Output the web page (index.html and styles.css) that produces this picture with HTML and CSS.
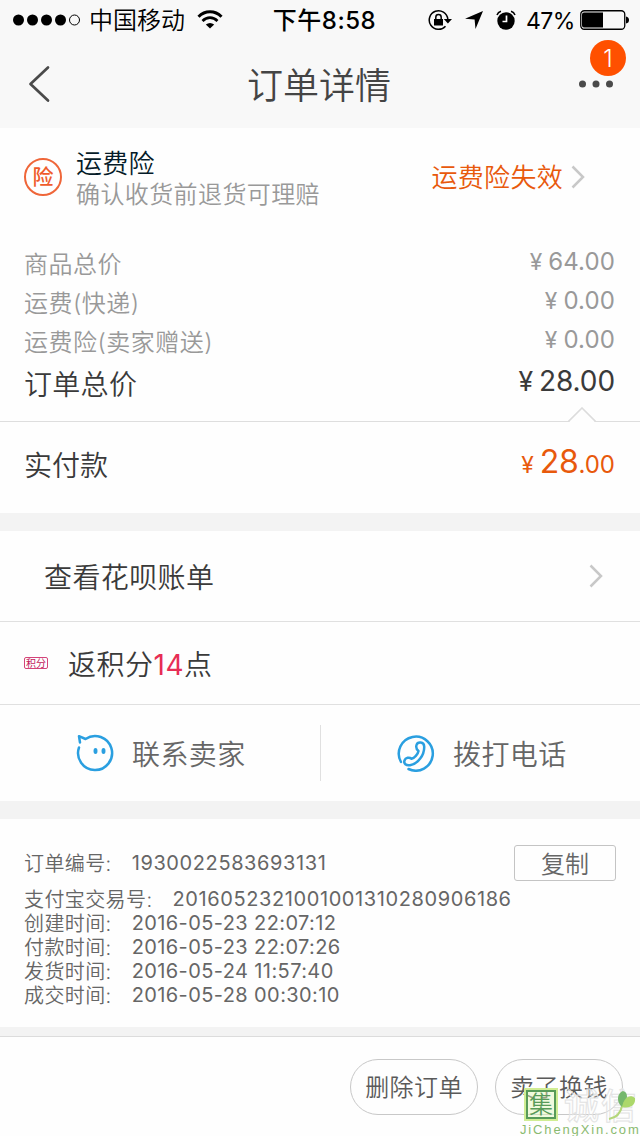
FILE: index.html
```html
<!DOCTYPE html>
<html lang="zh-CN">
<head>
<meta charset="utf-8">
<title>订单详情</title>
<link rel="stylesheet" href="styles.css">
</head>
<body>
<div class="screen">
  <header class="top">
    <div class="status">
      <div class="status-left">
        <svg class="signal" width="68" height="12" viewBox="0 0 68 12"><circle cx="5.5" cy="6" r="5.5"/><circle cx="19.5" cy="6" r="5.5"/><circle cx="33.5" cy="6" r="5.5"/><circle cx="47.5" cy="6" r="5.5"/><circle cx="61.5" cy="6" r="5" fill="none" stroke="#000" stroke-width="1"/></svg>
        <span class="carrier">中国移动</span>
        <svg class="wifi" width="26" height="20" viewBox="0 0 26 20" fill="none" stroke="#000"><path d="M1.5 6.8C8 .2 18 .2 24.500 6.800" stroke-width="3"/><path d="M5.500 11C10 6.600 16 6.600 20.500 11" stroke-width="2.700"/><path d="M13 18.500 8.800 14.600Q13 11.200 17.200 14.600Z" fill="#000" stroke="none"/></svg>
      </div>
      <div class="clock">下午8:58</div>
      <div class="status-right">
        <svg width="24" height="22" viewBox="0 0 24 22" fill="none" stroke="#000" stroke-width="1.500"><path d="M17.500 17.200A9.300 9.300 0 1 1 19.800 10"/><path d="M15.800 10H24l-4.100 4.600Z" fill="#000" stroke="none"/><path d="M6 10h9v6.500H6Z" fill="#000" stroke="none"/><path d="M7.800 10V8.200a2.700 2.700 0 0 1 5.400 0V10"/></svg>
        <svg class="arrow" width="18" height="18" viewBox="0 0 18 18"><path d="M18 0 10.500 18 9.600 8.500 0 7.700Z"/></svg>
        <svg class="alarm" width="20" height="20" viewBox="0 0 20 20"><circle cx="10" cy="11" r="8.700"/><path d="M1 5A6 6 0 0 1 5 1.200M15 1.200A6 6 0 0 1 19 5" fill="none" stroke="#000" stroke-width="1.500"/><path d="M10.500 5.500v6H6.500" fill="none" stroke="#fff" stroke-width="1.700"/></svg>
        <span class="percent">47%</span>
        <svg width="49" height="20" viewBox="0 0 49 20"><rect x=".75" y=".75" width="44" height="18.500" rx="3.500" fill="none" stroke="#000" stroke-width="1.300"/><path d="M4 2.500h19v15H4a2 2 0 0 1-2-2v-11a2 2 0 0 1 2-2Z"/><path d="M46 6.500q3 .5 3 3.500t-3 3.500Z"/></svg>
      </div>
    </div>
    <div class="nav">
      <svg class="back" width="22" height="38" viewBox="0 0 22 38" fill="none" stroke="#4a4a4a" stroke-width="2.700" stroke-linecap="round" stroke-linejoin="round"><path d="M20 2.500 2.500 19 20 35.500"/></svg>
      <h1>订单详情</h1>
      <div class="more">
        <svg width="34" height="8" viewBox="0 0 34 8" fill="#4a4a4a"><circle cx="3.500" cy="4" r="3.500"/><circle cx="17" cy="4" r="3.500"/><circle cx="30.500" cy="4" r="3.500"/></svg>
        <span class="badge">1</span>
      </div>
    </div>
  </header>

  <section class="insurance">
    <div class="seal">险</div>
    <div class="insurance-text">
      <div class="insurance-name">运费险</div>
      <div class="insurance-note">确认收货前退货可理赔</div>
    </div>
    <div class="insurance-state">运费险失效</div>
    <svg width="14" height="24" viewBox="0 0 14 24" fill="none" stroke="#c8c8c8" stroke-width="2.500"><path d="m1.500 1.500 10.500 10.500-10.500 10.500"/></svg>
  </section>

  <section class="prices">
    <div class="price"><span class="label">商品总价</span><span class="sum"><i class="yen">¥</i>64.00</span></div>
    <div class="price"><span class="label">运费(快递)</span><span class="sum"><i class="yen">¥</i>0.00</span></div>
    <div class="price"><span class="label">运费险(卖家赠送)</span><span class="sum"><i class="yen">¥</i>0.00</span></div>
    <div class="price total"><span class="label">订单总价</span><span class="sum"><i class="yen">¥</i>28.00</span></div>
  </section>

  <section class="paid">
    <svg class="notch" width="28" height="16" viewBox="0 0 28 16"><path d="M1 15 14 1.500 27 15v1H1Z" fill="#fefefe"/><path d="M.5 14.500 14 1 27.500 14.500" fill="none" stroke="#dcdcdc" stroke-width="1.600"/></svg>
    <span class="label">实付款</span>
    <span class="paid-sum"><i class="yen">¥</i><b>28</b>.00</span>
  </section>

  <section class="bill">
    <span>查看花呗账单</span>
    <svg width="14" height="24" viewBox="0 0 14 24" fill="none" stroke="#c8c8c8" stroke-width="2.500"><path d="m1.500 1.500 10.500 10.500-10.500 10.500"/></svg>
  </section>

  <section class="points">
    <span class="points-tag">积分</span>
    <span>返积分<em>14</em>点</span>
  </section>

  <section class="contact">
    <div class="contact-item">
      <svg width="38" height="38" viewBox="0 0 38 38" fill="none" stroke="#2a9fe0" stroke-width="2.500" stroke-linecap="round" stroke-linejoin="round"><path d="M4 8.500 3 2.200 9.500 5A17 17 0 1 1 3 13.500"/><g fill="#2a9fe0" stroke="none"><ellipse cx="19.500" cy="17" rx="2" ry="3"/><ellipse cx="27.500" cy="17" rx="2" ry="3"/></g></svg>
      <span>联系卖家</span>
    </div>
    <div class="contact-item">
      <svg width="38" height="38" viewBox="0 0 38 38" fill="none" stroke="#2a9fe0" stroke-width="2.500" stroke-linecap="round" stroke-linejoin="round"><path d="M4 28A17 17 0 1 1 11.500 35"/><path d="M19.500 11C20.500 7.500 27 7.500 27.200 12.500 27.500 21 21 30 13 31.200 9 31.800 6.500 29.500 7.500 26.500 8.500 23.500 12.500 23 14.500 24.800 17.500 24 20.800 20.500 21.500 17 19.500 15.500 18.800 13.500 19.500 11Z"/></svg>
      <span>拨打电话</span>
    </div>
  </section>

  <section class="order">
    <div class="line first"><span class="key">订单编号:</span><span class="num">1930022583693131</span><button class="copy">复制</button></div>
    <div class="line"><span class="key">支付宝交易号:</span><span class="num">2016052321001001310280906186</span></div>
    <div class="line"><span class="key">创建时间:</span><span class="date">2016-05-23 22:07:12</span></div>
    <div class="line"><span class="key">付款时间:</span><span class="date">2016-05-23 22:07:26</span></div>
    <div class="line"><span class="key">发货时间:</span><span class="date">2016-05-24 11:57:40</span></div>
    <div class="line"><span class="key">成交时间:</span><span class="date">2016-05-28 00:30:10</span></div>
  </section>

  <footer class="actions">
    <button class="pill">删除订单</button>
    <button class="pill">卖了换钱</button>
    <div class="watermark">
      <div class="mark-row"><span class="mark-box">集</span><span class="mark-outline">诚信</span></div>
      <svg class="leaf" width="28" height="32" viewBox="0 0 28 32"><path d="M1 29Q12 27 14 16" fill="none" stroke="#b4d77b" stroke-width="2"/><path d="M14 17C8 12 9 3 15 1c5 1 6 8-1 16Z" fill="#75b76c"/><path d="M14 17C16 7 22 4 27 8c1 7-5 11-13 9Z" fill="#acd86b"/></svg>
      <div class="mark-url">JiChengXin.com</div>
    </div>
  </footer>
</div>
</body>
</html>
```

FILE: styles.css
```css
* { box-sizing: border-box; }
body {
  margin: 0;
  background: #fefefe;
  font-family: Inter, "Noto Sans CJK SC", sans-serif;
  font-weight: 350;
  color: #3a3a3a;
}
svg { display: block; flex: none; }
i, em { font-style: normal; }
button { font: inherit; color: inherit; padding: 0; background: transparent; }
.screen {
  display: flex;
  flex-direction: column;
  width: 640px;
  height: 1136px;
  overflow: hidden;
}
.screen > * { flex: none; white-space: nowrap; }

.top { height: 128px; background: #f8f8f8; }
.status {
  display: grid;
  grid-template-columns: 260px 129px 251px;
  align-items: center;
  height: 40px;
  color: #000;
  font-size: 24px;
  line-height: 40px;
}
.status-left { display: flex; align-items: center; padding-left: 13px; }
.carrier { margin-left: 8px; padding-top: 2px; line-height: 38px; }
.wifi { margin-left: 12px; }
.clock { padding-top: 2px; line-height: 38px; text-align: center; font-weight: 500; letter-spacing: .5px; }
.status-right { display: flex; align-items: center; padding-left: 39px; }
.arrow { margin-left: 13px; }
.alarm { margin-left: 13px; }
.percent { width: 48px; margin: 2px 6px 0 10px; font-size: 23px; font-weight: 400; line-height: 38px; letter-spacing: -.5px; }

.nav {
  display: grid;
  grid-template-columns: 119px 1fr 121px;
  align-items: center;
  height: 88px;
}
.back { margin-left: 28px; }
.nav h1 { margin: 0; padding-top: 4px; font-size: 36px; font-weight: 350; line-height: 52px; text-align: center; color: #444; }
.more { position: relative; justify-self: end; margin-right: 27px; }
.badge {
  position: absolute;
  left: 11px;
  top: -40px;
  width: 36px;
  height: 36px;
  border-radius: 50%;
  background: #ff5000;
  color: #fff;
  font-size: 24px;
  line-height: 38px;
  text-align: center;
}

.insurance {
  display: flex;
  align-items: center;
  height: 100px;
  padding: 0 55px 2px 24px;
}
.seal {
  width: 38px;
  height: 38px;
  border: 2px solid #ef6639;
  border-radius: 50%;
  color: #ef5b2b;
  font-size: 21px;
  font-weight: 500;
  line-height: 34px;
  text-align: center;
}
.insurance-text { flex: 1; margin-left: 14px; padding-top: 4px; }
.insurance-name { font-size: 26px; line-height: 32px; letter-spacing: .2px; color: #051b28; }
.insurance-note { font-size: 24px; line-height: 30px; letter-spacing: .4px; color: #999; }
.insurance-state { margin-right: 8px; font-size: 26px; line-height: 36px; margin-top: 2px; letter-spacing: .3px; color: #e8590c; }

.prices { height: 193px; padding: 15px 25px 0 24px; }
.price {
  display: flex;
  justify-content: space-between;
  height: 39px;
  line-height: 39px;
  font-size: 24px;
  letter-spacing: .5px;
  color: #999;
}
.label { padding-top: 2px; }
.sum { margin-top: -1px; font-weight: 400; letter-spacing: .1px; }
.yen { margin-right: 6px; font-size: .95em; }
.total { height: 44px; line-height: 44px; font-size: 28px; color: #3a3a3a; }
.total .label { padding-top: 3px; letter-spacing: .3px; }
.total .sum { letter-spacing: -.1px; }

.paid {
  position: relative;
  display: flex;
  justify-content: space-between;
  height: 92px;
  padding: 0 25px 4px 24px;
  border-top: 1px solid #dedede;
  font-size: 28px;
  line-height: 85px;
}
.notch { position: absolute; left: 568px; top: -15px; }
.paid-sum { font-size: 24px; font-weight: 400; color: #e8590c; margin-top: -3px; }
.paid-sum b { font-size: 32px; font-weight: 400; letter-spacing: -.3px; }

.bill {
  display: flex;
  align-items: center;
  justify-content: space-between;
  height: 109px;
  padding: 0 37px 0 44px;
  border-top: 18px solid #f3f3f3;
  border-bottom: 1px solid #e0e0e0;
  font-size: 28px;
  letter-spacing: .4px;
}
.points {
  display: flex;
  align-items: center;
  height: 83px;
  padding-left: 24px;
  border-bottom: 1px solid #e0e0e0;
  font-size: 28px;
  letter-spacing: .5px;
}
.points-tag {
  width: 24px;
  height: 12px;
  margin-right: 20px;
  border: 1px solid #d4447a;
  border-radius: 2px;
  color: #c2185b;
  font-size: 10px;
  font-weight: 400;
  letter-spacing: 0;
  line-height: 10px;
  text-align: center;
}
.points em { color: #e72d55; font-weight: 400; }

.contact {
  display: flex;
  align-items: center;
  height: 96px;
  font-size: 28px;
  color: #666;
}
.contact-item {
  display: flex;
  align-items: center;
  width: 320px;
  height: 56px;
  padding-left: 76px;
  gap: 18px;
  letter-spacing: .4px;
}
.contact-item + .contact-item { border-left: 1px solid #e0e0e0; }

.order {
  height: 235px;
  padding: 25px 24px 0;
  border-top: 18px solid #f3f3f3;
  border-bottom: 9px solid #f3f3f3;
  font-size: 20px;
  color: #666;
}
.line { display: flex; height: 24px; line-height: 24px; align-items: center; }
.line > .key { padding-top: 2px; }
.first { height: 38px; margin-bottom: 5px; }
.key { margin-right: 20px; letter-spacing: .4px; }
.num, .date { font-weight: 400; }
.num { letter-spacing: .6px; }
.date { letter-spacing: .4px; }
.copy {
  width: 102px;
  height: 36px;
  margin-left: auto;
  border: 1px solid #c4c4c4;
  border-radius: 3px;
  font-size: 24px;
  line-height: 34px;
  padding-top: 2px;
}

.actions {
  position: relative;
  display: flex;
  justify-content: flex-end;
  gap: 17px;
  height: 100px;
  padding: 22px 17px 0 0;
  border-top: 1px solid #dcdcdc;
  color: #5a5a5a;
}
.pill {
  width: 128px;
  height: 56px;
  border: 1px solid #c8c8c8;
  border-radius: 28px;
  font-size: 24px;
  line-height: 54px;
  padding-top: 1px;
  letter-spacing: .4px;
}
.watermark { position: absolute; left: 520px; top: 53px; width: 120px; height: 46px; }
.mark-row { display: flex; gap: 8px; height: 30px; padding-left: 6px; }
.mark-box {
  flex: none;
  width: 30px;
  height: 29px;
  border: 2px solid #589b59;
  outline: 2px solid #d0ed93;
  color: #589b59;
  background: rgba(225, 246, 182, .45);
  font-size: 24px;
  line-height: 26px;
  text-align: center;
}
.mark-outline {
  font-size: 35px;
  line-height: 32px;
  font-weight: 500;
  letter-spacing: 2px;
  color: rgba(255, 255, 255, .25);
  -webkit-text-stroke: 1px #e2e2e2;
}
.leaf { position: absolute; left: 88px; top: 0; }
.mark-url {
  margin-top: 2px;
  font-family: "Liberation Sans", Arial, sans-serif;
  font-size: 13px;
  line-height: 15px;
  letter-spacing: 1.85px;
  color: #8aba70;
}
```
